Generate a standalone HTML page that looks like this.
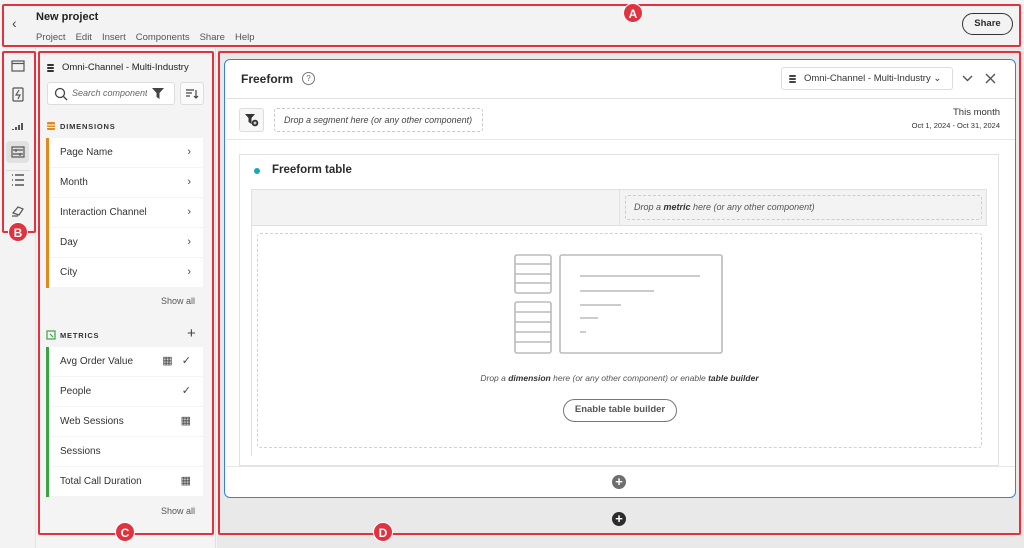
<!DOCTYPE html>
<html><head><meta charset="utf-8"><style>
*{box-sizing:border-box;margin:0;padding:0}
body{width:1024px;height:548px;position:relative;overflow:hidden;background:#f3f3f3;font-family:"Liberation Sans",sans-serif;color:#2c2c2c}
.abs{position:absolute}
.red{position:absolute;border:2px solid #e0323f;border-radius:2px}
.lbl{position:absolute;width:20px;height:20px;border-radius:50%;background:#e0323f;color:#fff;font-weight:bold;font-size:12px;text-align:center;line-height:20px;border:1.5px solid #fff}
.menu span{margin-right:10px}
.item{position:absolute;left:46px;width:157px;height:29px;background:#fff;font-size:10px;line-height:29px;padding-left:14px;color:#333}
.item .bar{position:absolute;left:0;top:0;width:3px;height:30px}
.item .r{position:absolute;right:12px;top:0;color:#444;font-size:11px}
</style></head><body>
<div class="abs" style="left:12px;top:15px;font-size:14px;color:#444">&#8249;</div>
<div class="abs" style="left:36px;top:11px;font-size:11px;font-weight:bold;color:#222">New project</div>
<div class="abs menu" style="left:36px;top:32px;font-size:9.5px;color:#555"><span>Project</span><span>Edit</span><span>Insert</span><span>Components</span><span>Share</span><span>Help</span></div>
<div class="abs" style="left:962px;top:13px;width:51px;height:22px;border:1.5px solid #333;border-radius:11px;font-size:9.5px;font-weight:bold;text-align:center;line-height:20px">Share</div>

<div class="abs" style="left:0;top:48px;width:36px;height:500px;background:#f3f3f3;border-right:1px solid #e4e4e4"></div>
<div class="abs" style="left:6px;top:141px;width:23px;height:22px;background:#e1e1e1;border-radius:4px"></div>
<svg class="abs" style="left:0;top:55px" width="36" height="170" fill="none" stroke="#555" stroke-width="1.2">
<rect x="12" y="6" width="12" height="10"/><line x1="12" y1="8.5" x2="24" y2="8.5"/>
<rect x="13" y="33" width="10" height="13" rx="1"/><path d="M19 35l-3 5h4l-2 4"/>
<path d="M13 75v-1M16 75v-3M19 75v-5M22 75v-7" stroke-width="2"/>
<rect x="12" y="92" width="12" height="10"/><path d="M13 95h10M13 99h10M16 94v3M20 98v3"/>
<path d="M12 120h1M15 120h9M12 125h1M15 125h9M12 130h1M15 130h9" stroke-width="1.5"/>
<path d="M13 158l5-6 5 2-4 6z M12 161h6"/>
</svg>
<div class="abs" style="left:6px;top:170px;width:24px;height:1px;background:#ddd"></div>

<div class="abs" style="left:37px;top:48px;width:179px;height:500px;background:#f4f4f4;border-right:1px solid #e0e0e0"></div>
<svg class="abs" style="left:46px;top:63px" width="10" height="10"><g fill="#333"><rect x="1" y="1" width="7" height="2" rx="1"/><rect x="1" y="4" width="7" height="2" rx="1"/><rect x="1" y="7" width="7" height="2" rx="1"/></g></svg>
<div class="abs" style="left:62px;top:62px;font-size:9.5px;color:#222">Omni-Channel - Multi-Industry</div>
<div class="abs" style="left:47px;top:82px;width:128px;height:23px;background:#fff;border:1px solid #ddd;border-radius:3px"></div>
<svg class="abs" style="left:54px;top:87px" width="14" height="14" fill="none" stroke="#444" stroke-width="1.3"><circle cx="6" cy="6" r="4.5"/><path d="M9.5 9.5l3.5 3.5"/></svg>
<div class="abs" style="left:72px;top:88px;font-size:9px;font-style:italic;color:#666;width:75px;overflow:hidden;white-space:nowrap">Search components</div>
<svg class="abs" style="left:152px;top:87px" width="12" height="12"><path d="M0 1h12l-4.5 5v6l-3-2v-4z" fill="#444"/></svg>
<div class="abs" style="left:180px;top:82px;width:24px;height:23px;background:#fafafa;border:1px solid #ddd;border-radius:3px"></div>
<svg class="abs" style="left:185px;top:88px" width="14" height="12" stroke="#444" stroke-width="1.2" fill="none"><path d="M1 2h8M1 5h6M1 8h4M11 2v8M9 8l2 2 2-2"/></svg>

<svg class="abs" style="left:46px;top:121px" width="10" height="10"><rect x="1" y="1" width="8" height="8" rx="1" fill="#e08a1e"/><path d="M1 4h8M1 6.5h8" stroke="#fff"/></svg>
<div class="abs" style="left:60px;top:122px;font-size:7.5px;font-weight:bold;letter-spacing:.8px;color:#333">DIMENSIONS</div>

<div class="item" style="top:138px"><div class="bar" style="background:#e08a1e"></div>Page Name<span class="r">&#8250;</span></div>
<div class="item" style="top:168px"><div class="bar" style="background:#e08a1e"></div>Month<span class="r">&#8250;</span></div>
<div class="item" style="top:198px"><div class="bar" style="background:#e08a1e"></div>Interaction Channel<span class="r">&#8250;</span></div>
<div class="item" style="top:228px"><div class="bar" style="background:#e08a1e"></div>Day<span class="r">&#8250;</span></div>
<div class="item" style="top:258px"><div class="bar" style="background:#e08a1e"></div>City<span class="r">&#8250;</span></div>
<div class="abs" style="left:161px;top:296px;font-size:9px;color:#555">Show all</div>

<svg class="abs" style="left:46px;top:330px" width="10" height="10" fill="none" stroke="#3aa346" stroke-width="1.2"><rect x="1" y="1" width="8" height="8"/><path d="M4 4l3 3"/></svg>
<div class="abs" style="left:60px;top:331px;font-size:7.5px;font-weight:bold;letter-spacing:.8px;color:#333">METRICS</div>
<div class="abs" style="left:187px;top:325px;font-size:15px;color:#444">+</div>

<div class="item" style="top:347px"><div class="bar" style="background:#3aa346"></div>Avg Order Value<span class="r">&#9638;&nbsp;&nbsp;&nbsp;&#10003;</span></div>
<div class="item" style="top:377px"><div class="bar" style="background:#3aa346"></div>People<span class="r">&#10003;</span></div>
<div class="item" style="top:407px"><div class="bar" style="background:#3aa346"></div>Web Sessions<span class="r">&#9638;</span></div>
<div class="item" style="top:437px"><div class="bar" style="background:#3aa346"></div>Sessions</div>
<div class="item" style="top:467px"><div class="bar" style="background:#3aa346"></div>Total Call Duration<span class="r">&#9638;</span></div>
<div class="abs" style="left:161px;top:506px;font-size:9px;color:#555">Show all</div>

<div class="abs" style="left:217px;top:48px;width:807px;height:500px;background:#e9e9e9"></div>
<div class="abs" style="left:224px;top:59px;width:792px;height:439px;background:#fff;border:1.5px solid #3b7fd6;border-radius:6px"></div>
<div class="abs" style="left:241px;top:72px;font-size:12px;font-weight:bold;color:#2c2c2c">Freeform</div>
<div class="abs" style="left:302px;top:72px;width:13px;height:13px;border:1px solid #777;border-radius:50%;font-size:8px;text-align:center;line-height:11px;color:#666">?</div>
<div class="abs" style="left:781px;top:67px;width:172px;height:23px;border:1px solid #ddd;border-radius:3px;font-size:9.5px;line-height:21px;padding-left:22px;color:#333">Omni-Channel - Multi-Industry &#8964;</div>
<svg class="abs" style="left:788px;top:74px" width="10" height="10"><g fill="#444"><rect x="1" y="1" width="7" height="2" rx="1"/><rect x="1" y="4" width="7" height="2" rx="1"/><rect x="1" y="7" width="7" height="2" rx="1"/></g></svg>
<svg class="abs" style="left:962px;top:73px" width="36" height="12" fill="none" stroke="#555" stroke-width="1.4"><path d="M1 3l4.5 4.5L10 3M24 1l9 9M33 1l-9 9"/></svg>
<div class="abs" style="left:226px;top:98px;width:789px;height:1px;background:#e2e2e2"></div>
<div class="abs" style="left:239px;top:108px;width:25px;height:24px;background:#f7f7f7;border:1px solid #ddd;border-radius:3px"></div>
<svg class="abs" style="left:245px;top:113px" width="14" height="14"><path d="M0 1h10l-3.5 4v6l-3-2v-4z" fill="#333"/><circle cx="10" cy="10" r="3.3" fill="#333"/><path d="M8.5 10h3M10 8.5v3" stroke="#fff" stroke-width="1"/></svg>
<div class="abs" style="left:274px;top:108px;width:209px;height:24px;border:1px dashed #c8c8c8;border-radius:3px;font-size:9px;font-style:italic;color:#444;line-height:22px;padding-left:9px">Drop a segment here (or any other component)</div>
<div class="abs" style="left:880px;top:107px;width:120px;text-align:right;font-size:9.5px;color:#333">This month</div>
<div class="abs" style="left:880px;top:121px;width:120px;text-align:right;font-size:7.5px;color:#333">Oct 1, 2024 - Oct 31, 2024</div>
<div class="abs" style="left:226px;top:139px;width:789px;height:1px;background:#e6e6e6"></div>

<div class="abs" style="left:239px;top:154px;width:760px;height:312px;border:1px solid #e2e2e2;background:#fff"></div>
<div class="abs" style="left:254px;top:168px;width:6px;height:6px;border-radius:50%;background:#17a8b8"></div>
<div class="abs" style="left:272px;top:164px;font-size:11.5px;font-weight:bold;color:#2c2c2c">Freeform table</div>
<div class="abs" style="left:251px;top:189px;width:736px;height:37px;background:#f3f3f3;border:1px solid #e0e0e0"></div>
<div class="abs" style="left:619px;top:189px;width:1px;height:37px;background:#e0e0e0"></div>
<div class="abs" style="left:625px;top:195px;width:357px;height:25px;border:1px dashed #ccc;border-radius:3px;font-size:9px;font-style:italic;color:#555;line-height:23px;padding-left:8px">Drop a <b style="color:#333">metric</b> here (or any other component)</div>
<div class="abs" style="left:251px;top:226px;width:1px;height:230px;background:#e0e0e0"></div>
<div class="abs" style="left:257px;top:233px;width:725px;height:215px;border:1px dashed #d2d2d2;border-radius:3px"></div>
<svg class="abs" style="left:513px;top:253px" width="212" height="104" fill="none" stroke="#bbb" stroke-width="1.6">
<rect x="2" y="2" width="36" height="38" rx="2"/><path d="M2 11h36M2 21h36M2 30h36"/>
<rect x="2" y="49" width="36" height="51" rx="2"/><path d="M2 59h36M2 69h36M2 79h36M2 89h36"/>
<rect x="47" y="2" width="162" height="98" rx="2"/>
<path d="M67 23h120M67 38h74M67 52h41M67 65h18M67 79h6"/>
</svg>
<div class="abs" style="left:257px;top:373px;width:725px;text-align:center;font-size:8.5px;font-style:italic;color:#555">Drop a <b style="color:#333">dimension</b> here (or any other component) or enable <b style="color:#333">table builder</b></div>
<div class="abs" style="left:563px;top:399px;width:114px;height:23px;border:1.5px solid #777;border-radius:12px;font-size:9.5px;font-weight:bold;color:#555;text-align:center;line-height:20px">Enable table builder</div>
<div class="abs" style="left:226px;top:466px;width:789px;height:1px;background:#e6e6e6"></div>
<div class="abs" style="left:612px;top:475px;width:14px;height:14px;border-radius:50%;background:#6e6e6e;color:#fff;font-size:13px;font-weight:bold;text-align:center;line-height:14px">+</div>
<div class="abs" style="left:612px;top:512px;width:14px;height:14px;border-radius:50%;background:#2c2c2c;color:#fff;font-size:13px;font-weight:bold;text-align:center;line-height:14px">+</div>

<div class="red" style="left:2px;top:4px;width:1019px;height:43px"></div>
<div class="red" style="left:2px;top:51px;width:34px;height:182px"></div>
<div class="red" style="left:38px;top:51px;width:176px;height:484px"></div>
<div class="red" style="left:218px;top:51px;width:803px;height:484px"></div>
<div class="lbl" style="left:623px;top:3px">A</div>
<div class="lbl" style="left:8px;top:222px">B</div>
<div class="lbl" style="left:115px;top:522px">C</div>
<div class="lbl" style="left:373px;top:522px">D</div>
</body></html>
